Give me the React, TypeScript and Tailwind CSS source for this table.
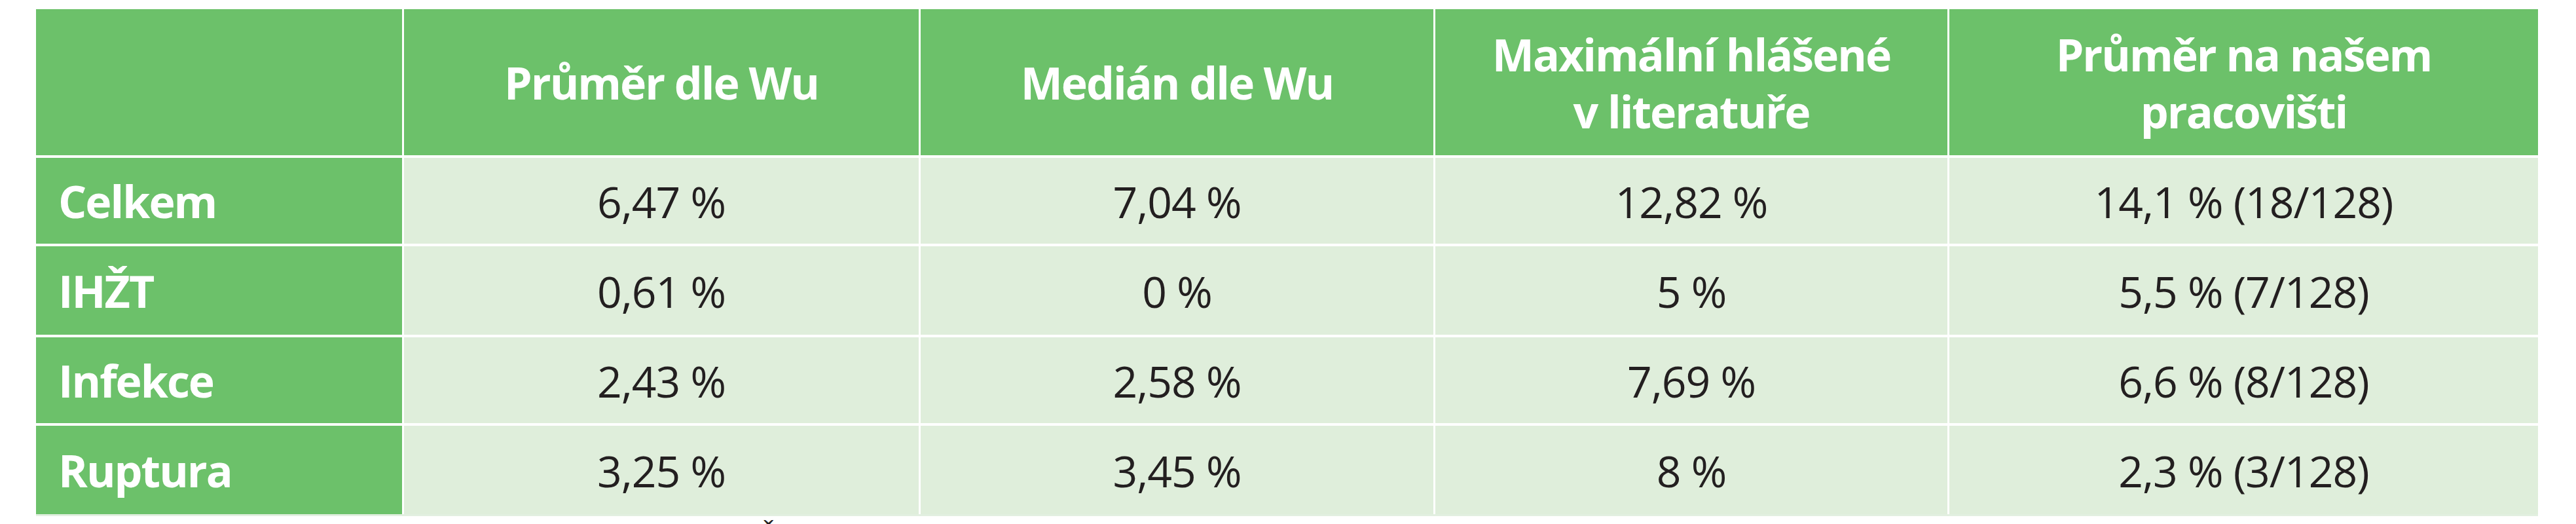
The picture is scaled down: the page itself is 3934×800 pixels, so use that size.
import React from "react";

const headers: string[][] = [
  [],
  ["Průměr dle Wu"],
  ["Medián dle Wu"],
  ["Maximální hlášené", "v literatuře"],
  ["Průměr na našem", "pracovišti"],
];

const rows: string[][] = [
  ["Celkem", "6,47 %", "7,04 %", "12,82 %", "14,1 % (18/128)"],
  ["IHŽT", "0,61 %", "0 %", "5 %", "5,5 % (7/128)"],
  ["Infekce", "2,43 %", "2,58 %", "7,69 %", "6,6 % (8/128)"],
  ["Ruptura", "3,25 %", "3,45 %", "8 %", "2,3 % (3/128)"],
];

export default function App() {
  return (
    <div className="w-[3934px] h-[800px] overflow-hidden bg-white pt-[14px] pl-[55px] font-['Open_Sans',sans-serif]">
      <div className="grid w-max grid-cols-[559px_786px_783px_782px_899px] grid-rows-[223px_131px_135px_131px_135px] gap-x-[3px] gap-y-[4px] border-b-[3px] border-[#e2efe0]">
        {headers.map((lines, i) => (
          <div
            key={i}
            className="flex flex-col items-center justify-center bg-[#6cc16a] text-center text-[68px] font-bold leading-[87px] tracking-[-2px] text-white"
          >
            {lines.map((l) => (
              <span key={l}>{l}</span>
            ))}
          </div>
        ))}
        {rows.map((r) =>
          r.map((cell, j) =>
            j === 0 ? (
              <div
                key={r[0] + j}
                className="flex items-center bg-[#6cc16a] pl-[34px] text-[68px] font-bold leading-none tracking-[-2px] text-white"
              >
                {cell}
              </div>
            ) : (
              <div
                key={r[0] + j}
                className="flex items-center justify-center bg-[#dfeedb] text-[66px] leading-none tracking-[-1px] text-[#231f20]"
              >
                {cell}
              </div>
            )
          )
        )}
      </div>
      <div className="mt-[9px] pl-[1102px] text-[44px] leading-[44px] text-[#231f20]">Č</div>
    </div>
  );
}
